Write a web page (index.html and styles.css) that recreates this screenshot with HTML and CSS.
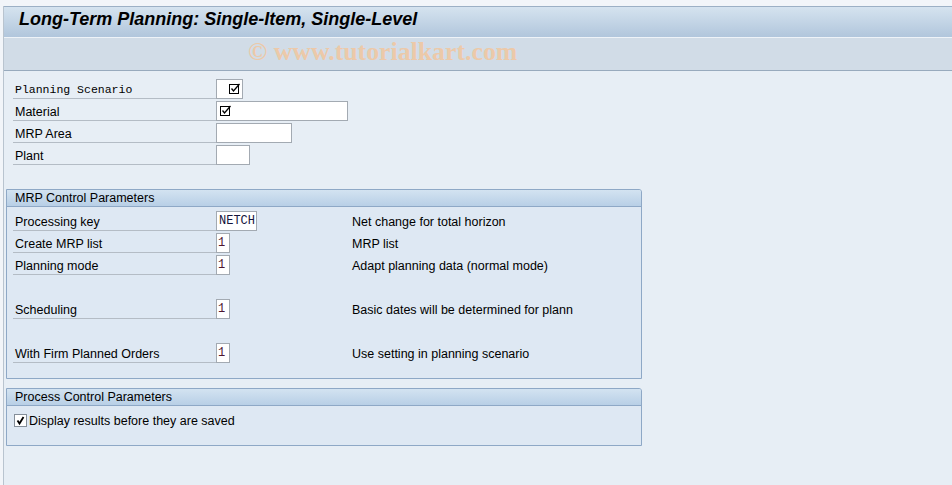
FILE: index.html
```html
<!DOCTYPE html>
<html lang="en">
<head>
	<meta charset="UTF-8">
	<title>Long-Term Planning: Single-Item, Single-Level</title>
	<link rel="stylesheet" href="styles.css">
</head>
<body>
	<div id="screen">
		<div class="titlebar">Long-Term Planning: Single-Item, Single-Level</div>
		<div class="toolbar"><span class="mark">&copy; www.tutorialkart.com</span></div>

		<div class="form">
			<div class="row">
				<div class="lbl mono">Planning Scenario</div>
				<div class="field f-scen">
					<svg class="pick" width="12" height="11" viewBox="0 0 12 11"><rect x="0.5" y="1.5" width="9" height="9" fill="none" stroke="#000"/><path d="M2.5 5.5 L4.5 8 L10.5 1" fill="none" stroke="#000" stroke-width="1.3"/></svg>
				</div>
			</div>
			<div class="row">
				<div class="lbl">Material</div>
				<div class="field f-mat">
					<svg class="pick" width="12" height="11" viewBox="0 0 12 11"><rect x="0.5" y="1.5" width="9" height="9" fill="none" stroke="#000"/><path d="M2.5 5.5 L4.5 8 L10.5 1" fill="none" stroke="#000" stroke-width="1.3"/></svg>
				</div>
			</div>
			<div class="row">
				<div class="lbl">MRP Area</div>
				<div class="field f-area"></div>
			</div>
			<div class="row">
				<div class="lbl">Plant</div>
				<div class="field f-plant"></div>
			</div>
		</div>

		<div class="group g-mrp">
			<div class="ghead">MRP Control Parameters</div>
			<div class="gbody">
				<div class="row">
					<div class="lbl">Processing key</div>
					<div class="cell"><div class="field f-key">NETCH</div></div>
					<div class="desc">Net change for total horizon</div>
				</div>
				<div class="row">
					<div class="lbl">Create MRP list</div>
					<div class="cell"><div class="field f-one">1</div></div>
					<div class="desc">MRP list</div>
				</div>
				<div class="row">
					<div class="lbl">Planning mode</div>
					<div class="cell"><div class="field f-one">1</div></div>
					<div class="desc">Adapt planning data (normal mode)</div>
				</div>
				<div class="row blank"></div>
				<div class="row">
					<div class="lbl">Scheduling</div>
					<div class="cell"><div class="field f-one">1</div></div>
					<div class="desc">Basic dates will be determined for plann</div>
				</div>
				<div class="row blank"></div>
				<div class="row">
					<div class="lbl">With Firm Planned Orders</div>
					<div class="cell"><div class="field f-one">1</div></div>
					<div class="desc">Use setting in planning scenario</div>
				</div>
			</div>
		</div>

		<div class="group g-proc">
			<div class="ghead">Process Control Parameters</div>
			<div class="gbody">
				<div class="row">
					<span class="chk"><svg width="11" height="11" viewBox="0 0 11 11"><path d="M2.5 5.5 L4.5 8.5 L8.5 2" fill="none" stroke="#000" stroke-width="1.8"/></svg></span>
					<span class="chk-text">Display results before they are saved</span>
				</div>
			</div>
		</div>
	</div>
</body>
</html>
```

FILE: styles.css
```css
*{
	margin: 0;
	padding: 0;
	box-sizing: border-box;
}
html{
	background: #f2f5f9;
}
body{
	font-family: "Liberation Sans", Arial, sans-serif;
	font-size: 12.5px;
	color: #000;
}
#screen{
	margin: 6px 0 0 3px;
	height: 479px;
	border-left: 1px solid #b9c4cf;
	background: #e7eef5;
}
.titlebar{
	height: 31px;
	padding-left: 15px;
	border-top: 1px solid #9cb0c5;
	background: linear-gradient(#d5e3ef, #b1c6dc);
	font-size: 18px;
	font-weight: bold;
	font-style: italic;
	line-height: 25px;
}
.toolbar{
	height: 34px;
	padding-left: 244px;
	border-top: 1px solid #eef3f8;
	border-bottom: 1px solid #98aabd;
	background: #d1dce7;
	line-height: 28px;
}
.mark{
	font-family: "Liberation Serif", "Times New Roman", serif;
	font-size: 25.8px;
	font-weight: bold;
	color: #ecc9a9;
}
.form{
	padding: 8px 0 0 9px;
}
.row{
	display: flex;
	height: 22px;
}
.lbl{
	width: 203px;
	height: 20px;
	padding-left: 2px;
	border-bottom: 1px solid #b4bcc5;
	line-height: 22px;
	white-space: nowrap;
}
.mono{
	font-family: "Liberation Mono", "Courier New", monospace;
	font-size: 11.5px;
}
.field{
	height: 20px;
	border: 1px solid #a3aab2;
	background: #fff;
	font-family: "Liberation Mono", "Courier New", monospace;
	font-size: 12px;
	line-height: 18px;
}
.pick{
	display: block;
	margin-top: 3px;
}
.f-scen{ width: 27px; padding-left: 12px; }
.f-mat{ width: 132px; padding-left: 3px; }
.f-area{ width: 76px; }
.f-plant{ width: 34px; }
.f-key{ width: 41px; padding-left: 2px; color: #14143c; }
.f-one{ width: 14px; padding-left: 1px; color: #4d1630; }
.cell{
	width: 136px;
}
.desc{
	line-height: 22px;
	white-space: nowrap;
}
.group{
	width: 636px;
	margin-left: 2px;
	border: 1px solid #8ea8c6;
	border-top-right-radius: 3px;
	background: #dee8f3;
}
.g-mrp{
	margin-top: 22px;
}
.g-proc{
	margin-top: 9px;
}
.ghead{
	height: 17px;
	padding-left: 8px;
	border-bottom: 1px solid #8ea8c6;
	background: linear-gradient(#d3e3f1, #b8cfe6);
	line-height: 16px;
	border-top-right-radius: 2px;
}
.gbody{
	padding: 4px 0 0 6px;
}
.g-mrp .gbody{
	height: 171px;
}
.g-proc .gbody{
	height: 39px;
}
.chk{
	width: 13px;
	height: 13px;
	margin: 4px 2px 0 1px;
	border: 1px solid #848e99;
	background: #fff;
}
.chk svg{
	display: block;
}
.chk-text{
	line-height: 22px;
}
```
